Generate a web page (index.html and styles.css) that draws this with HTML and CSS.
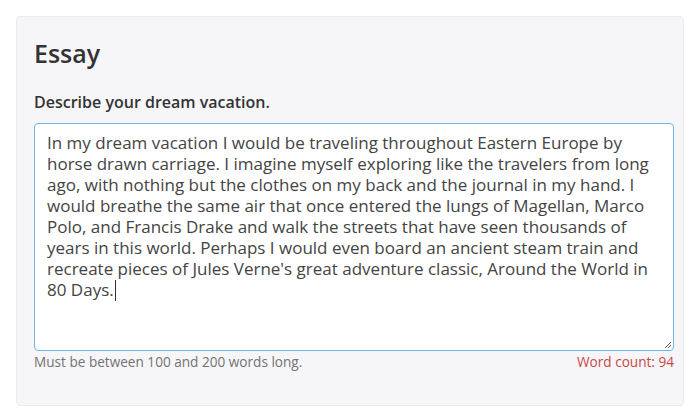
FILE: index.html
```html
<!DOCTYPE html>
<html lang="en">
<head>
<meta charset="utf-8">
<title>Essay</title>
<link rel="stylesheet" href="styles.css">
</head>
<body>
<div class="card">
  <h3 class="title">Essay</h3>
  <label class="label">Describe your dream vacation.</label>
  <div class="textarea">In my dream vacation I would be traveling throughout Eastern Europe by horse drawn carriage. I imagine myself exploring like the travelers from long ago, with nothing but the clothes on my back and the journal in my hand. I would breathe the same air that once entered the lungs of Magellan, Marco Polo, and Francis Drake and walk the streets that have seen thousands of years in this world. Perhaps I would even board an ancient steam train and recreate pieces of Jules Verne's great adventure classic, Around the World in 80 Days.<span class="caret"></span>
    <svg class="grip" width="9" height="9" viewBox="0 0 9 9"><path d="M8 2 L2 8 M8 5 L5 8" stroke="#555" stroke-width="1" fill="none"/></svg>
  </div>
  <div class="help">
    <span class="hint">Must be between 100 and 200 words long.</span>
    <span class="count">Word count: 94</span>
  </div>
</div>
</body>
</html>
```
FILE: styles.css
```css
html, body { margin: 0; padding: 0; background: #fff; }
body {
  padding: 16px;
  font-family: "Open Sans", "Liberation Sans", sans-serif;
  color: #333;
}
.card {
  width: 668px;
  height: 390px;
  box-sizing: border-box;
  background: #f6f6f8;
  border: 1px solid #ebebee;
  border-radius: 4px;
  padding: 15px 9px 0 17px;
}
.title {
  margin: 0;
  font-size: 25px;
  font-weight: 600;
  line-height: 42px;
  color: #333;
}
.label {
  display: block;
  margin-top: 18px;
  font-size: 16px;
  font-weight: 600;
  line-height: 20px;
}
.textarea {
  position: relative;
  margin-top: 11px;
  width: 640px;
  height: 228px;
  box-sizing: border-box;
  background: #fff;
  border: 1px solid #72b6e4;
  border-radius: 4px;
  padding: 8px 12px;
  font-size: 17px;
  line-height: 21px;
  color: #444;
}
.caret {
  display: inline-block;
  width: 1px;
  height: 21px;
  background: #333;
  vertical-align: -5px;
  margin-left: 1px;
}
.grip {
  position: absolute;
  right: 1px;
  bottom: 1px;
}
.help {
  width: 640px;
  display: flex;
  justify-content: space-between;
  margin-top: 1px;
  font-size: 13.6px;
  line-height: 20px;
}
.hint { color: #737373; }
.count { color: #c9464a; }
```
